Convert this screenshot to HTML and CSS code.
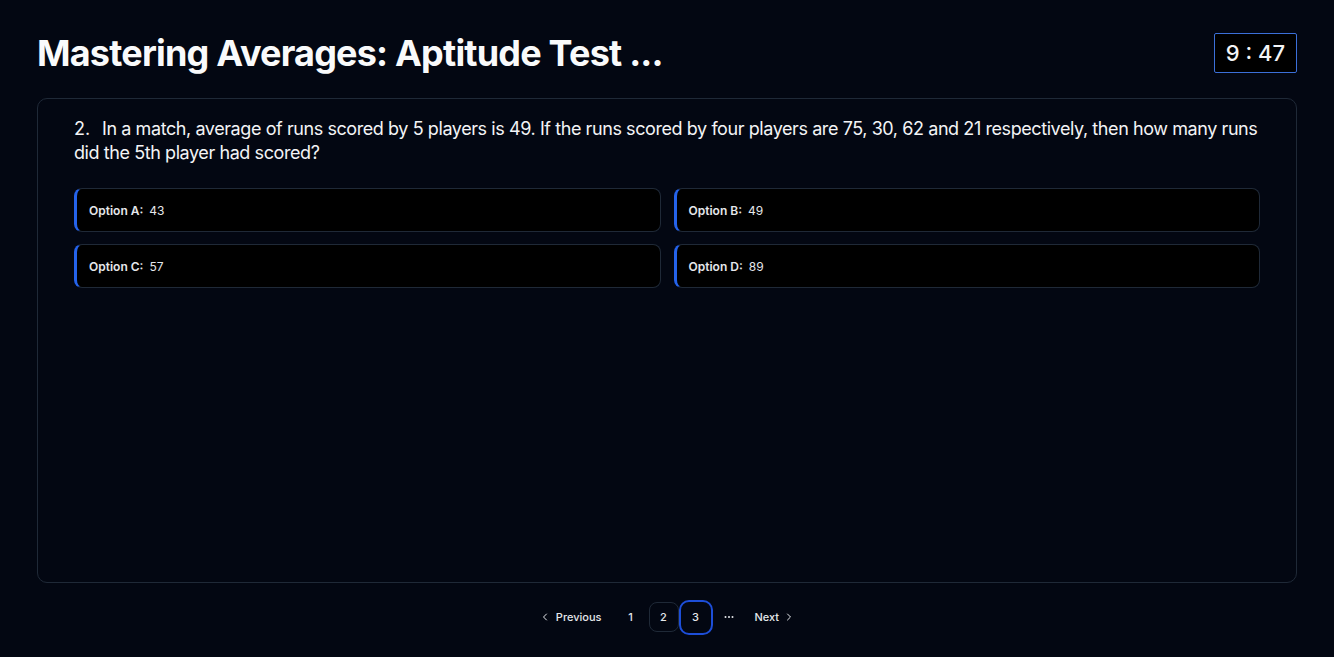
FILE: index.html
```html
<!DOCTYPE html>
<html lang="en">
<head>
<meta charset="utf-8">
<title>Mastering Averages: Aptitude Test</title>
<link rel="stylesheet" href="styles.css">
</head>
<body>
<div class="page">
  <header class="header">
    <h1 class="title">Mastering Averages: Aptitude Test ...</h1>
    <div class="timer">9 : 47</div>
  </header>
  <main class="card">
    <p class="question"><span class="qnum">2.</span>In a match, average of runs scored by 5 players is 49. If the runs scored by four players are 75, 30, 62 and 21 respectively, then how many runs did the 5th player had scored?</p>
    <div class="options">
      <div class="option"><span class="opt-label">Option A:</span><span class="opt-value">43</span></div>
      <div class="option"><span class="opt-label">Option B:</span><span class="opt-value">49</span></div>
      <div class="option"><span class="opt-label">Option C:</span><span class="opt-value">57</span></div>
      <div class="option"><span class="opt-label">Option D:</span><span class="opt-value">89</span></div>
    </div>
  </main>
  <nav class="pager">
    <a class="pg-link pg-prev"><svg width="12" height="12" viewBox="0 0 24 24" fill="none" stroke="currentColor" stroke-width="2" stroke-linecap="round" stroke-linejoin="round"><path d="m15 18-6-6 6-6"/></svg>Previous</a>
    <a class="pg-num">1</a>
    <a class="pg-num pg-outline">2</a>
    <a class="pg-num pg-active">3</a>
    <span class="pg-ellipsis"><svg width="12" height="12" viewBox="0 0 24 24" fill="currentColor"><circle cx="5" cy="12" r="2"/><circle cx="12" cy="12" r="2"/><circle cx="19" cy="12" r="2"/></svg></span>
    <a class="pg-link pg-next">Next<svg width="12" height="12" viewBox="0 0 24 24" fill="none" stroke="currentColor" stroke-width="2" stroke-linecap="round" stroke-linejoin="round"><path d="m9 18 6-6-6-6"/></svg></a>
  </nav>
</div>
</body>
</html>
```

FILE: styles.css
```css
* { box-sizing: border-box; }
html, body { margin: 0; padding: 0; }
body {
  background: #030712;
  color: #f9fafb;
  font-family: Inter, "Noto Sans", sans-serif;
  height: 657px;
  overflow: hidden;
}
.page {
  padding: 33px 37px 0 37px;
  display: flex;
  flex-direction: column;
}
.header {
  display: flex;
  align-items: center;
  justify-content: space-between;
  height: 40px;
}
.title {
  margin: 0;
  font-size: 36px;
  font-weight: 700;
  letter-spacing: -0.8px;
  line-height: 40px;
  color: #f9fafb;
}
.timer {
  width: 83px;
  height: 40px;
  background: #000;
  border: 1px solid #3b6fd8;
  border-radius: 2px;
  display: flex;
  align-items: center;
  justify-content: center;
  font-size: 22px;
  font-weight: 500;
  color: #f3f4f6;
}
.card {
  margin-top: 25px;
  height: 485px;
  border: 1px solid #1f2937;
  border-radius: 10px;
  padding: 18px 36px;
}
.question {
  margin: 0;
  font-size: 18px;
  line-height: 24px;
  letter-spacing: -0.42px;
  color: #f3f4f6;
}
.qnum { display: inline-block; width: 28px; letter-spacing: 0; }
.options {
  margin-top: 23px;
  display: grid;
  grid-template-columns: 1fr 1fr;
  gap: 12px 13px;
}
.option {
  height: 44px;
  background: #000;
  border: 1px solid #1f2937;
  border-left: 3px solid #2563eb;
  border-radius: 8px;
  display: flex;
  align-items: center;
  padding-left: 12px;
  font-size: 12px;
  color: #e5e7eb;
}
.opt-label { font-weight: 600; margin-right: 6px; }
.opt-value { font-weight: 400; }
.pager {
  margin-top: 16px;
  display: flex;
  justify-content: center;
  align-items: center;
  gap: 4px;
  font-size: 11px;
  font-weight: 500;
  color: #e5e7eb;
}
.pg-link {
  display: flex;
  align-items: center;
  gap: 5px;
  height: 36px;
  padding: 0 10px;
}
.pg-next { gap: 4px; }
.pg-num {
  width: 30px;
  height: 30px;
  display: flex;
  align-items: center;
  justify-content: center;
  border-radius: 8px;
  border: 1px solid transparent;
}
.pg-outline { border-color: #1f2937; margin-left: -1px; }
.pg-active {
  width: 34px;
  height: 35px;
  border: 2px solid #1d4ed8;
  border-radius: 10px;
  margin-left: -4px;
}
.pg-ellipsis {
  width: 24px;
  display: flex;
  justify-content: center;
}
```
